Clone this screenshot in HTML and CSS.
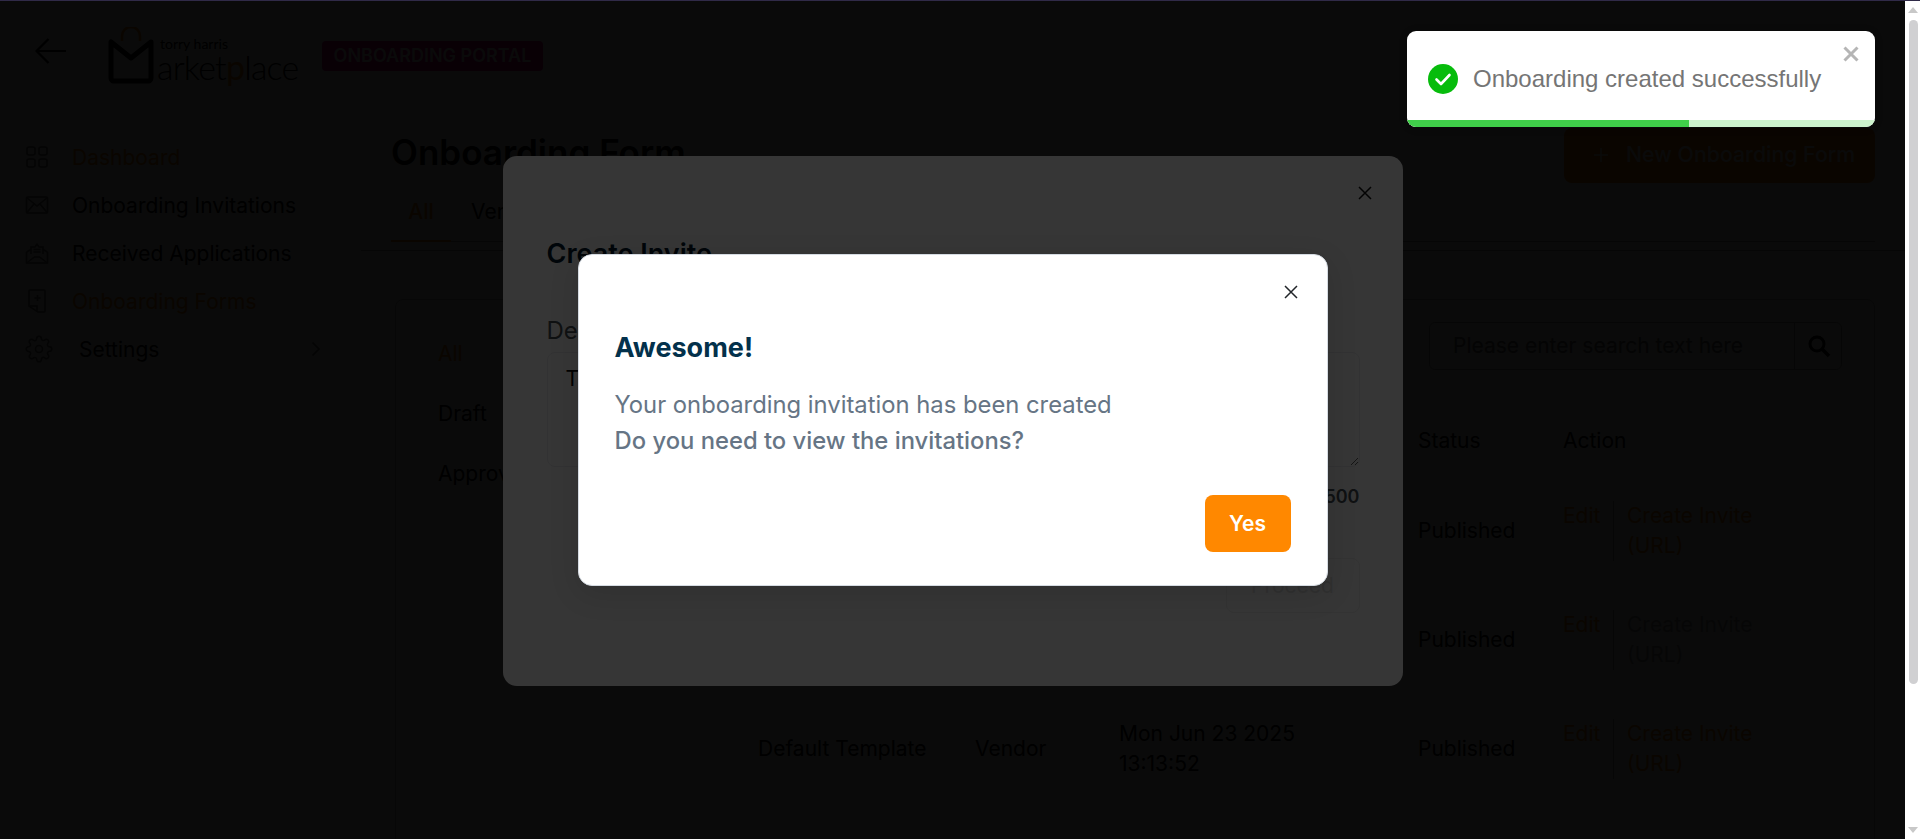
FILE: index.html
```html
<!DOCTYPE html>
<html lang="en">
<head>
<meta charset="utf-8">
<title>Onboarding Form</title>
<link rel="stylesheet" href="styles.css">
</head>
<body>
<div class="root">
  <div class="viewport">
    <div class="page">
      <header class="header">
        <svg class="back" viewBox="0 0 31 26" width="31" height="26"><path d="M31 13H1.5M13.5 1 1.5 13l12 12" fill="none" stroke="#000" stroke-width="2.2"/></svg>
        <div class="logo">
          <svg class="logo-bag" viewBox="0 0 46 58" width="46" height="58"><path d="M14 14V9a9 9 0 0 1 18 0v5" fill="none" stroke="#ff8800" stroke-width="2.5"/><path d="M3 15v36a3 3 0 0 0 3 3h34a3 3 0 0 0 3-3V15L23 31Z" fill="none" stroke="#000" stroke-width="5" stroke-linejoin="round"/></svg>
          <div class="logo-text">
            <span class="logo-top">torry harris</span>
            <span class="logo-main">arket<span class="logo-p">p</span>lace</span>
          </div>
        </div>
        <span class="badge">ONBOARDING PORTAL</span>
      </header>
      <div class="body">
        <nav class="sidebar">
          <a class="nav-item active">
            <svg class="nav-icon" viewBox="0 0 24 24" width="24" height="24"><g fill="none" stroke="#666" stroke-width="1.6"><rect x="2" y="2" width="8" height="8" rx="2"/><rect x="14" y="2" width="8" height="8" rx="2"/><rect x="2" y="14" width="8" height="8" rx="2"/><rect x="14" y="14" width="8" height="8" rx="2"/></g></svg>
            <span>Dashboard</span>
          </a>
          <a class="nav-item">
            <svg class="nav-icon" viewBox="0 0 24 24" width="24" height="24"><g fill="none" stroke="#666" stroke-width="1.5"><rect x="1.5" y="4" width="21" height="16" rx="1"/><path d="M1.5 4.500 12 13 22.500 4.500M1.500 20 9 11M22.500 20 15 11"/></g></svg>
            <span>Onboarding Invitations</span>
          </a>
          <a class="nav-item">
            <svg class="nav-icon" viewBox="0 0 24 24" width="24" height="24"><g fill="none" stroke="#666" stroke-width="1.5"><path d="M1.500 11v11h21V11"/><path d="M1.500 11 6 8.500M22.500 11 18 8.500M1.500 22l8-6h5l8 6"/><path d="M6 13V6h4l2-3 2 3h4v7"/><path d="M8.500 8.500h7M8.500 11h7"/></g></svg>
            <span>Received Applications</span>
          </a>
          <a class="nav-item active">
            <svg class="nav-icon" viewBox="0 0 24 24" width="24" height="24"><g fill="none" stroke="#666" stroke-width="1.5"><path d="M5 1h14a1 1 0 0 1 1 1v20a1 1 0 0 1-1 1h-6l-9-6V2a1 1 0 0 1 1-1Z"/><path d="M5 17h7v6M12.500 6v6M9.500 9h6"/></g></svg>
            <span>Onboarding Forms</span>
          </a>
          <a class="nav-item settings">
            <svg class="nav-icon gear" viewBox="0 0 24 24" width="28" height="28"><g fill="none" stroke="#666" stroke-width="1.300"><circle cx="12" cy="12" r="3"/><path d="M19.400 15a1.650 1.650 0 0 0 .33 1.820l.06.06a2 2 0 0 1 0 2.830 2 2 0 0 1-2.830 0l-.06-.06a1.650 1.650 0 0 0-1.820-.33 1.650 1.650 0 0 0-1 1.510V21a2 2 0 0 1-2 2 2 2 0 0 1-2-2v-.09A1.650 1.650 0 0 0 9 19.400a1.650 1.650 0 0 0-1.820.33l-.06.06a2 2 0 0 1-2.830 0 2 2 0 0 1 0-2.830l.06-.06a1.650 1.650 0 0 0 .33-1.820 1.650 1.650 0 0 0-1.510-1H3a2 2 0 0 1-2-2 2 2 0 0 1 2-2h.09A1.650 1.650 0 0 0 4.600 9a1.650 1.650 0 0 0-.33-1.820l-.06-.06a2 2 0 0 1 0-2.830 2 2 0 0 1 2.830 0l.06.06a1.650 1.650 0 0 0 1.820.33H9a1.650 1.650 0 0 0 1-1.510V3a2 2 0 0 1 2-2 2 2 0 0 1 2 2v.09a1.650 1.650 0 0 0 1 1.510 1.650 1.650 0 0 0 1.820-.33l.06-.06a2 2 0 0 1 2.830 0 2 2 0 0 1 0 2.830l-.06.06a1.650 1.650 0 0 0-.33 1.820V9a1.650 1.650 0 0 0 1.510 1H21a2 2 0 0 1 2 2 2 2 0 0 1-2 2h-.09a1.650 1.650 0 0 0-1.510 1z"/></g></svg>
            <span class="nav-label">Settings</span>
            <svg class="chevron" viewBox="0 0 10 16" width="10" height="16"><path d="M1.500 1.500 8 8l-6.500 6.500" fill="none" stroke="#666" stroke-width="1.500"/></svg>
          </a>
        </nav>
        <main class="main">
          <div class="main-top">
            <div class="title-row">
              <h1 class="title">Onboarding Form</h1>
              <button class="new-btn"><svg class="plus" viewBox="0 0 14 14" width="14" height="14"><path d="M7 0v14M0 7h14" stroke="#fff" stroke-width="1.500"/></svg>New Onboarding Form</button>
            </div>
            <div class="tabs">
              <span class="tab current">All</span>
              <span class="tab">Vendor</span>
              <span class="tab">Customer</span>
            </div>
          </div>
          <section class="panel">
            <ul class="filters">
              <li class="filter current">All</li>
              <li class="filter">Draft</li>
              <li class="filter">Approved</li>
            </ul>
            <div class="content">
              <div class="search">
                <span class="search-input">Please enter search text here</span>
                <span class="search-btn"><svg viewBox="0 0 24 24" width="24" height="24"><circle cx="10" cy="10" r="7" fill="none" stroke="#000" stroke-width="3"/><path d="m15 15 7 7" stroke="#000" stroke-width="3.500"/></svg></span>
              </div>
              <table class="table">
                <colgroup><col class="col-name"><col class="col-type"><col class="col-date"><col class="col-status"><col class="col-action"></colgroup>
                <thead>
                  <tr><th>Name</th><th>Type</th><th>Created</th><th>Status</th><th>Action</th></tr>
                </thead>
                <tbody>
                  <tr>
                    <td>Default Template</td><td>Vendor</td><td><span class="date">Mon Jun 23 2025 13:13:52</span></td><td>Published</td>
                    <td><div class="actions"><a class="edit">Edit</a><a class="invite">Create Invite (URL)</a></div></td>
                  </tr>
                  <tr>
                    <td>Default Template</td><td>Vendor</td><td><span class="date">Mon Jun 23 2025 13:13:52</span></td><td>Published</td>
                    <td><div class="actions"><a class="edit">Edit</a><a class="invite disabled">Create Invite (URL)</a></div></td>
                  </tr>
                  <tr>
                    <td>Default Template</td><td>Vendor</td><td><span class="date">Mon Jun 23 2025 13:13:52</span></td><td>Published</td>
                    <td><div class="actions"><a class="edit">Edit</a><a class="invite">Create Invite (URL)</a></div></td>
                  </tr>
                </tbody>
              </table>
            </div>
          </section>
        </main>
      </div>
    </div>

    <div class="backdrop backdrop-one">
      <div class="modal-create">
        <svg class="close close-create" viewBox="0 0 14 14" width="14" height="14"><path d="m1 1 12 12M13 1 1 13" stroke="#111" stroke-width="1.500"/></svg>
        <h2 class="create-title">Create Invite</h2>
        <label class="create-label">Description</label>
        <textarea class="create-text" readonly>Test</textarea>
        <div class="counter">4/500</div>
        <div class="create-foot"><button class="proceed">Proceed</button></div>
      </div>
    </div>

    <div class="backdrop backdrop-two">
      <div class="modal-done">
        <svg class="close close-done" viewBox="0 0 14 14" width="14" height="14"><path d="m1 1 12 12M13 1 1 13" stroke="#212529" stroke-width="1.500"/></svg>
        <h2 class="done-title">Awesome!</h2>
        <p class="done-line">Your onboarding invitation has been created</p>
        <p class="done-line strong">Do you need to view the invitations?</p>
        <div class="done-foot"><button class="yes">Yes</button></div>
      </div>
    </div>

    <div class="toast">
      <div class="toast-body">
        <svg class="toast-icon" viewBox="0 0 30 30" width="30" height="30"><circle cx="15" cy="15" r="15" fill="#07bc0c"/><path d="m8.500 15.500 4.500 4.500 8.500-9" fill="none" stroke="#fff" stroke-width="2.600" stroke-linecap="round" stroke-linejoin="round"/></svg>
        <span class="toast-text">Onboarding created successfully</span>
        <svg class="toast-close" viewBox="0 0 16 16" width="16" height="16"><path d="m1.500 1.500 13 13M14.500 1.500l-13 13" stroke="#b5b5b5" stroke-width="3"/></svg>
      </div>
      <div class="toast-track"><div class="toast-bar"></div></div>
    </div>
  </div>

  <div class="scrollbar">
    <span class="arrow-up"></span>
    <span class="thumb"></span>
    <span class="arrow-down"></span>
  </div>
</div>
</body>
</html>
```

FILE: styles.css
```css
* { box-sizing: border-box; }
html, body { margin: 0; height: 100%; overflow: hidden; background: #fff; }
body { font-family: Inter, "Noto Sans", sans-serif; font-size: 21px; color: #000; }
button { font-family: inherit; }

.root { display: flex; height: 839px; border-top: 1px solid #302a48; overflow: hidden; }
.viewport { position: relative; width: 1905px; height: 838px; overflow: hidden; background: #fff; }
.page { width: 100%; }

/* header */
.header { display: flex; align-items: center; height: 99px; padding-left: 35px; }
.back { flex: none; }
.logo { display: flex; width: 190px; margin: 10px 0 0 42px; }
.logo-bag { flex: none; }
.logo-text { display: flex; flex-direction: column; margin: 10px 0 0 3px; line-height: 1; white-space: nowrap; }
.logo-top { font-family: Lato, sans-serif; font-size: 14px; margin-left: 3px; height: 13px; }
.logo-main { font-family: Lato, sans-serif; font-weight: 300; font-size: 34px; letter-spacing: -.8px; }
.logo-p { color: #ff8800; font-weight: 400; }
.badge { margin: 10px 0 0 24px; height: 30px; width: 221px; display: flex; align-items: center; justify-content: center; border-radius: 4px; background: #e0008f; color: #fff; font-weight: 600; font-size: 18px; white-space: nowrap; }

/* layout */
.body { display: flex; }
.sidebar { flex: none; width: 361px; padding: 33px 40px 0 25px; }
.nav-item { display: flex; align-items: center; height: 48px; color: #000; white-space: nowrap; }
.nav-item.active { color: #ff8800; }
.nav-icon { flex: none; margin-right: 23px; }
.gear { margin-right: 26px; }
.nav-label { flex: 1; }
.chevron { flex: none; }
.main { flex: 1; min-width: 0; }
.main-top { padding: 28px 30px 8px 30px; border-bottom: 1px solid #aaa; }
.title-row { display: flex; justify-content: space-between; height: 55px; }
.title { margin: 0; font-size: 35px; font-weight: 600; line-height: 48px; }
.new-btn { width: 311px; height: 55px; border: 0; border-radius: 8px; background: #ff8800; color: #fff; font-size: 21.300px; font-weight: 500; line-height: 53px; display: flex; align-items: flex-start; padding: 0 0 0 30px; white-space: nowrap; }
.plus { flex: none; margin: 20px 18px 0 0; }
.tabs { display: flex; height: 59px; border-bottom: 1px solid #aaa; }
.tab { width: 60px; height: 59px; padding-top: 14px; line-height: 30px; text-align: center; white-space: nowrap; margin-right: 20px; }
.tab + .tab { width: auto; }
.tab.current { color: #ff8800; border-bottom: 2px solid #ff8800; font-weight: 500; }

/* panel */
.panel { display: flex; margin: 48px 30px 0 34px; height: 600px; border: 1px solid #bbb; border-radius: 8px; }
.filters { flex: none; width: 342px; margin: 0; padding: 24px 0 0 42px; list-style: none; }
.filter { height: 60px; line-height: 60px; }
.filter.current { color: #ff8800; }
.content { flex: 1; min-width: 0; padding-top: 22px; }
.search { display: flex; width: 413px; height: 48px; margin-left: 691px; border: 1px solid #aaa; border-radius: 6px; }
.search-input { flex: 1; padding-left: 23px; line-height: 46px; color: #666; border-right: 1px solid #aaa; white-space: nowrap; }
.search-btn { flex: none; width: 46px; display: flex; align-items: center; justify-content: center; padding-left: 2px; }
.table { width: 1137px; margin-top: 35px; border-collapse: collapse; table-layout: fixed; }
.col-name { width: 217px; }
.col-type { width: 144px; }
.col-date { width: 299px; }
.col-status { width: 145px; }
.table th { height: 71px; padding: 0 20px; text-align: left; font-weight: 400; }
.table td { height: 109px; padding: 0 20px; line-height: 30px; }
.date { display: block; width: 190px; }
.actions { display: flex; align-items: flex-start; }
.edit { color: #ff8800; width: 50px; flex: none; }
.invite { color: #ff8800; border-left: 1px solid #aaa; padding-left: 13px; width: 150px; flex: none; }
.invite.disabled { color: #aaa; }

/* overlays */
.backdrop { position: absolute; inset: 0; display: flex; justify-content: center; align-items: flex-start; }
.backdrop-one { background: rgba(0, 0, 0, .81); padding-top: 155px; }
.backdrop-two { background: rgba(0, 0, 0, .79); padding-top: 253px; }
.close { position: absolute; }

.modal-create { position: relative; width: 900px; height: 530px; padding: 78px 43px 0 44px; background: #fff; border-radius: 14px; }
.close-create { right: 31px; top: 30px; }
.create-title { margin: 0; font-size: 27px; font-weight: 600; line-height: 40px; color: #001b2e; }
.create-label { display: block; margin-top: 37px; font-size: 24px; line-height: 40px; color: #495057; }
.create-text { display: block; width: 813px; height: 115px; margin-top: 1px; padding: 11px 18px; border: 1px solid #e9ecef; border-radius: 8px; font: 400 21px/30px Inter, sans-serif; color: #000; resize: vertical; outline: 0; }
.counter { margin-top: 16px; text-align: right; font-size: 18px; font-weight: 600; line-height: 28px; color: #495057; }
.create-foot { display: flex; justify-content: flex-end; margin-top: 47px; }
.proceed { width: 134px; height: 55px; border: 1px solid #eee; border-radius: 8px; background: #fff; font-size: 21px; color: #e2e2e2; }

.modal-done { position: relative; width: 750px; height: 332px; padding: 73px 36px 0; background: #fff; border: 1px solid #d5dbe2; border-radius: 14px; box-shadow: 0 8px 30px rgba(0, 0, 0, .12); }
.close-done { right: 29px; top: 30px; }
.done-title { margin: 0 0 19px; font-size: 27px; font-weight: 700; line-height: 40px; color: #03314b; }
.done-line { margin: 0; font-size: 23.800px; line-height: 36px; color: #667585; white-space: nowrap; }
.done-line.strong { font-weight: 500; }
.done-foot { display: flex; justify-content: flex-end; margin-top: 36px; }
.yes { width: 86px; height: 57px; border: 0; border-radius: 8px; background: #ff8800; color: #fff; font-size: 21px; font-weight: 600; padding: 0; }

.toast { position: absolute; top: 30px; right: 30px; width: 468px; height: 96px; display: flex; flex-direction: column; background: #fff; border-radius: 9px; overflow: hidden; box-shadow: 0 1px 10px rgba(0, 0, 0, .1); }
.toast-body { position: relative; flex: 1; display: flex; align-items: center; padding: 7px 0 0 21px; }
.toast-icon { flex: none; margin-right: 15px; }
.toast-text { font-family: "Liberation Sans", Arial, sans-serif; font-size: 24px; color: #757575; white-space: nowrap; }
.toast-close { position: absolute; top: 15px; right: 16px; }
.toast-track { flex: none; height: 7px; background: #cdf3cd; }
.toast-bar { width: 282px; height: 100%; background: #40cf4a; }

/* scrollbar */
.scrollbar { flex: none; width: 15px; height: 838px; display: flex; flex-direction: column; align-items: center; background: #fff; }
.arrow-up { margin-top: 6px; width: 0; height: 0; border: 5px solid transparent; border-top: 0; border-bottom: 6px solid #c8c8c8; }
.thumb { width: 9px; height: 664px; margin: 7px 0 0 2px; background: #d0d0d2; border-radius: 5px; }
.arrow-down { margin-top: auto; margin-bottom: 6px; width: 0; height: 0; border: 5px solid transparent; border-bottom: 0; border-top: 6px solid #c8c8c8; }
```
